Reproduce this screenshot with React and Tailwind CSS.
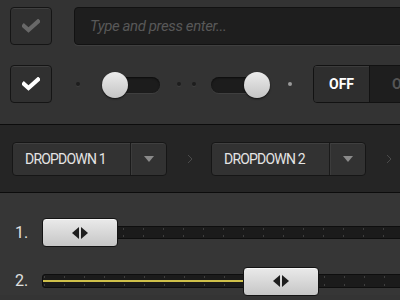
import React from "react";

const Check = ({ color }) => (
  <svg width="18" height="14" viewBox="0 0 18 14">
    <path d="M2 7 L6.5 11 L16 2.5" fill="none" stroke={color} strokeWidth="4.2" strokeLinecap="square" strokeLinejoin="miter" />
  </svg>
);

const Checkbox = ({ color }) => (
  <div className="w-[42px] h-[38px] shrink-0 rounded-[4px] border border-[#151515] bg-[#303030] shadow-[inset_0_1px_0_rgba(255,255,255,0.08)] flex items-center justify-center">
    <Check color={color} />
  </div>
);

const Dot = ({ light }) => (
  <div className={light ? "w-[4px] h-[4px] rounded-full bg-[#9a9a9a] shrink-0" : "w-[4px] h-[4px] rounded-full bg-[#1d1d1d] shadow-[0_1px_0_rgba(255,255,255,0.06)] shrink-0"} />
);

const Knob = ({ cls }) => (
  <div className={"absolute top-[-5px] w-[26px] h-[26px] rounded-full bg-[linear-gradient(#ececec,#c4c4c4)] shadow-[0_1px_2px_rgba(0,0,0,0.7)] " + cls} />
);

const Dropdown = ({ label }) => (
  <div className="w-[155px] h-[34px] shrink-0 rounded-[4px] border border-[#161616] bg-[#323232] shadow-[inset_0_1px_0_rgba(255,255,255,0.07)] flex">
    <div className="w-[117px] flex items-center pl-[12px] text-[14px] text-[#e4e4e4] font-['Roboto',sans-serif] tracking-[-0.8px] whitespace-nowrap">{label}</div>
    <div className="w-px bg-[#1a1a1a]" />
    <div className="w-px bg-[#3c3c3c]" />
    <div className="flex-1 flex items-center justify-center">
      <svg width="10" height="6" viewBox="0 0 10 6"><path d="M0 0 L10 0 L5 6 Z" fill="#8a8a8a" /></svg>
    </div>
  </div>
);

const Chevron = () => (
  <svg width="6" height="10" viewBox="0 0 6 10" className="shrink-0"><path d="M1 1 L5 5 L1 9" fill="none" stroke="#4a4a4a" strokeWidth="1" /></svg>
);

const TickMarks = ({ width, start, bottom }) => {
  const xs = [];
  for (let x = start; x < width; x += 20) xs.push(x);
  return (
    <svg className="absolute inset-0" width={width} height="13">
      {xs.map((x) => (
        <g key={x}>
          <rect x={x} y="1" width="1" height="2" fill="#3e3e3e" />
          <rect x={x} y={bottom} width="1" height="2" fill="#3e3e3e" />
        </g>
      ))}
    </svg>
  );
};

const Thumb = () => (
  <div className="w-[76px] h-[29px] shrink-0 rounded-[4px] border border-[#141414] bg-[linear-gradient(#eaeaea,#c6c6c6)] shadow-[inset_0_1px_0_rgba(255,255,255,0.6)] flex items-center justify-center gap-[2px]">
    <svg width="7" height="12" viewBox="0 0 7 12"><path d="M7 0 L0 6 L7 12 Z" fill="#1e1e1e" /></svg>
    <svg width="7" height="12" viewBox="0 0 7 12"><path d="M0 0 L7 6 L0 12 Z" fill="#1e1e1e" /></svg>
  </div>
);

export default function App() {
  return (
    <div className="w-[400px] h-[300px] overflow-hidden bg-[#343434] font-['Roboto',sans-serif]">
      {/* top */}
      <div className="h-[124px] bg-[#333333] pt-[7px] pl-[10px]">
        <div className="flex items-center h-[38px]">
          <Checkbox color="#686868" />
          <div className="ml-[22px] w-[340px] h-[38px] shrink-0 rounded-[4px] border border-[#121212] bg-[#1e1e1e] shadow-[0_1px_0_rgba(255,255,255,0.06)] flex items-center pl-[15px] text-[15px] tracking-[-0.4px] italic text-[#585858]">
            Type and press enter...
          </div>
        </div>
        <div className="flex items-center h-[38px] mt-[20px]">
          <Checkbox color="#ffffff" />
          <div className="ml-[24px]"><Dot /></div>
          <div className="ml-[22px] relative w-[58px] h-[16px] shrink-0 rounded-full bg-[#1c1c1c] shadow-[inset_0_1px_2px_rgba(0,0,0,0.6),0_1px_0_rgba(255,255,255,0.06)] mt-[2px]">
            <Knob cls="left-0" />
          </div>
          <div className="ml-[17px]"><Dot /></div>
          <div className="ml-[11px]"><Dot /></div>
          <div className="ml-[15px] relative w-[59px] h-[16px] shrink-0 rounded-full bg-[#1c1c1c] shadow-[inset_0_1px_2px_rgba(0,0,0,0.6),0_1px_0_rgba(255,255,255,0.06)] mt-[2px]">
            <Knob cls="right-0" />
          </div>
          <div className="ml-[18px]"><Dot light /></div>
          <div className="ml-[21px] flex h-[38px] shrink-0 rounded-[4px] border border-[#121212] w-[120px] overflow-hidden">
            <div className="w-[56px] bg-[#2e2e2e] shadow-[inset_0_1px_0_rgba(255,255,255,0.07)] border-r border-[#121212] flex items-center justify-center text-[14px] font-bold text-white">OFF</div>
            <div className="flex-1 bg-[#1e1e1e] flex items-center pl-[22px] text-[14px] font-bold text-[#555]">ON</div>
          </div>
        </div>
      </div>
      <div className="h-px bg-[#0c0c0c]" />
      {/* middle */}
      <div className="h-[67px] bg-[#252525] pt-[17px] pl-[12px] flex items-start">
        <Dropdown label="DROPDOWN 1" />
        <div className="ml-[20px] h-[34px] flex items-center"><Chevron /></div>
        <div className="ml-[18px]"><Dropdown label="DROPDOWN 2" /></div>
        <div className="ml-[20px] h-[34px] flex items-center"><Chevron /></div>
      </div>
      <div className="h-px bg-[#0c0c0c]" />
      {/* bottom */}
      <div className="bg-[#363636] pt-[25px] pl-[15px]">
        <div className="flex items-center h-[29px]">
          <div className="w-[27px] shrink-0 text-[16px] text-[#e0e0e0]">1.</div>
          <div className="flex items-center shrink-0">
            <Thumb />
            <div className="relative w-[300px] h-[13px] bg-[#1b1b1b] border-y border-[#0e0e0e] shrink-0">
              <TickMarks width={300} start={5} bottom={8} />
            </div>
          </div>
        </div>
        <div className="flex items-center h-[29px] mt-[19px]">
          <div className="w-[27px] shrink-0 text-[16px] text-[#e0e0e0]">2.</div>
          <div className="relative w-[380px] h-[14px] shrink-0 rounded-[3px] bg-[#1b1b1b] border border-[#0e0e0e]">
            <TickMarks width={380} start={1} bottom={9} />
            <div className="absolute left-0 top-[5px] w-[200px] h-[2px] bg-[#cfc04a]" />
            <div className="absolute left-[200px] top-[-8px]"><Thumb /></div>
          </div>
        </div>
      </div>
    </div>
  );
}
